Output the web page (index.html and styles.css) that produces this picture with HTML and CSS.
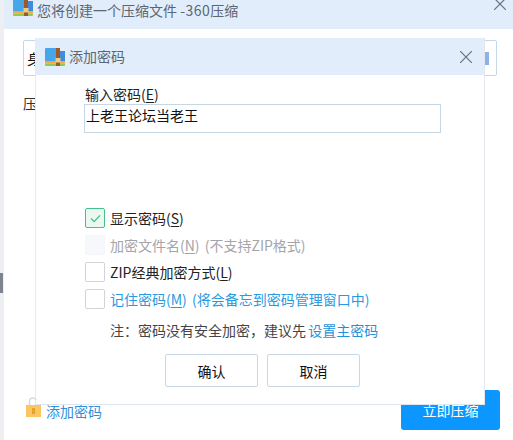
FILE: index.html
```html
<!DOCTYPE html>
<html lang="zh-CN">
<head>
<meta charset="utf-8">
<title>添加密码</title>
<link rel="stylesheet" href="styles.css">
</head>
<body>
<svg class="defs" aria-hidden="true">
  <symbol id="zip" viewBox="0 0 20 20">
    <path d="M0 2Q0 1 1 1H11V15H0Z" fill="#46a6ea"></path>
    <path d="M15 4H20V15H15Z" fill="#3f8cdc"></path>
    <rect y="14" width="20" height="2.500" fill="#f2a93f"></rect>
    <path d="M0 16.500H20V18Q20 19 19 19H1Q0 19 0 18Z" fill="#8fcb4e"></path>
    <rect x="11" y="1" width="4" height="18" fill="#9c5a2a"></rect>
    <rect x="10.500" y="11" width="5" height="4.500" fill="#edc98a"></rect>
  </symbol>
</svg>
<div class="side">
  <span class="side-mark"></span>
</div>
<main class="window">
  <header class="win-title">
    <svg class="zip-icon top" viewBox="0 0 20 20" aria-hidden="true"><use href="#zip"></use></svg>
    <span class="win-name">您将创建一个压缩文件 <span class="ver">-360</span>压缩</span>
    <svg class="close win-close" viewBox="0 0 12 12" aria-hidden="true"><path d="M0 0L12 12M12 0L0 12"></path></svg>
  </header>
  <div class="path-box"><span>身</span><i class="path-mark"></i></div>
  <div class="format-label">压</div>
  <footer class="win-foot">
    <a class="add-pass">
      <svg class="lock" viewBox="0 0 15 20" aria-hidden="true">
        <path d="M3.500 8V4.500Q3.500 1 7 1Q9.500 1 10 3" fill="none" stroke="#d9d9dc" stroke-width="1.500"></path>
        <rect y="8" width="15" height="12" fill="#f9c662"></rect>
        <rect x="6" y="11" width="3" height="6" fill="#e9a02e"></rect>
      </svg>
      <span>添加密码</span>
    </a>
    <button class="go">立即压缩</button>
  </footer>
</main>

<section class="dialog">
  <header class="dlg-title">
    <svg class="zip-icon" viewBox="0 0 20 20" aria-hidden="true"><use href="#zip"></use></svg>
    <span>添加密码</span>
    <svg class="close" viewBox="0 0 12 12" aria-hidden="true"><path d="M0 0L12 12M12 0L0 12"></path></svg>
  </header>
  <div class="dlg-body">
    <label class="pw-label">输入密码(<u>E</u>)</label>
    <div class="pw-input">上老王论坛当老王</div>
    <ul class="options">
      <li class="opt"><span class="box on"><svg viewBox="0 0 12 10" aria-hidden="true"><path d="M1 5L4.500 8.500L11 1.500"></path></svg></span><span>显示密码(<u>S</u>)</span></li>
      <li class="opt dim"><span class="box off"></span><span>加密文件名(<u>N</u>) (不支持ZIP格式)</span></li>
      <li class="opt"><span class="box"></span><span>ZIP经典加密方式(<u>L</u>)</span></li>
      <li class="opt link"><span class="box"></span><span>记住密码(<u>M</u>) (将会备忘到密码管理窗口中)</span></li>
    </ul>
    <p class="note">注：密码没有安全加密，建议先 <a>设置主密码</a></p>
    <div class="actions">
      <button class="btn">确认</button>
      <button class="btn">取消</button>
    </div>
  </div>
</section>
</body>
</html>
```
FILE: styles.css
```css
* { box-sizing: border-box; }
html, body { height: 100%; }
body {
  margin: 0;
  width: 513px;
  height: 440px;
  overflow: hidden;
  display: flex;
  position: relative;
  background: #fff;
  color: #222;
  font-family: "Noto Sans CJK SC", "Microsoft YaHei", sans-serif;
  font-size: 14px;
  line-height: 20px;
}
u { text-underline-offset: 2px; }
.defs { display: none; }

.side {
  width: 4px;
  flex: none;
  background: #eeeff3;
  padding-top: 273px;
}
.side-mark {
  display: block;
  width: 3px;
  height: 20px;
  background: #7d8390;
}

.window {
  flex: 1;
  display: flex;
  flex-direction: column;
  min-width: 0;
}
.win-title {
  height: 29px;
  flex: none;
  display: flex;
  align-items: flex-start;
  gap: 4px;
  padding: 0 7px 0 9px;
  background: #e1edfb;
  color: #5c6570;
}
.zip-icon { width: 20px; height: 20px; flex: none; display: block; }
.zip-icon.top { margin-top: -3px; }
.win-name { flex: 1; }
.ver { letter-spacing: 0.500px; }
.close {
  width: 12px;
  height: 12px;
  flex: none;
  fill: none;
  stroke: #6a7079;
  stroke-width: 1.200;
}
.win-close { margin-top: -2px; }

.path-box {
  margin: 11px 16px 0 19px;
  height: 36px;
  border: 1px solid #c5d6e6;
  border-radius: 2px;
  display: flex;
  align-items: center;
  justify-content: space-between;
  padding-left: 3px;
  color: #111;
}
.path-mark {
  width: 4px;
  height: 13px;
  margin-right: 7px;
  background: #8fb2e6;
}
.format-label {
  margin: 17px 0 0 19px;
  color: #333;
}

.win-foot {
  margin-top: auto;
  height: 50px;
  padding: 0 13px 10px 22px;
  display: flex;
  align-items: flex-end;
  justify-content: space-between;
}
.add-pass {
  display: flex;
  align-items: flex-start;
  gap: 5px;
  height: 33px;
  color: #2f8fd8;
  position: relative;
  z-index: 2;
}
.lock { width: 15px; height: 20px; flex: none; }
.add-pass span { margin-top: 4px; line-height: 20px; }
.go {
  width: 99px;
  height: 40px;
  border: 0;
  border-radius: 3px;
  background: #0b97ff;
  color: #fff;
  font: inherit;
}

.dialog {
  position: absolute;
  z-index: 1;
  left: 35px;
  top: 38px;
  width: 450px;
  height: 367px;
  background: #fff;
  border-left: 1px solid #e8e9f2;
  border-right: 1px solid #e3e6ec;
  border-bottom: 1px solid #dde6ee;
  display: flex;
  flex-direction: column;
}
.dlg-title {
  height: 37px;
  flex: none;
  background: #e1edfb;
  color: #5c6570;
  display: flex;
  align-items: center;
  gap: 4px;
  padding: 0 12px 0 9px;
}
.dlg-title span { flex: 1; margin-top: -2px; }
.dlg-body {
  flex: 1;
  padding: 9px 0 0 48px;
  display: flex;
  flex-direction: column;
}
.pw-label { display: block; height: 20px; margin-left: 1px; color: #222; }
.pw-input {
  width: 357px;
  height: 29px;
  border: 1px solid #c5d7e4;
  padding: 0 1px;
  font-size: 14px;
  color: #111;
}
.options {
  list-style: none;
  margin: 75px 0 0;
  padding: 0;
  display: flex;
  flex-direction: column;
  gap: 7px;
}
.opt {
  display: flex;
  align-items: center;
  gap: 5px;
  height: 20px;
  padding-left: 1px;
  word-spacing: 2px;
}
.box {
  width: 20px;
  height: 20px;
  flex: none;
  border: 1px solid #d2d4d8;
  border-radius: 2px;
  background: #fff;
  display: flex;
  align-items: center;
  justify-content: center;
}
.box.on { border-color: #45c08a; background: #e9f8f0; }
.box.on svg { width: 11px; height: 9px; fill: none; stroke: #45c08a; stroke-width: 1.500; }
.box.off { border-color: #f5f6f9; background: #f7f8fb; }
.dim { color: #a3a5aa; }
.link { color: #2a9ae0; }
.note {
  margin: 11px 0 0 26px;
  color: #444;
  word-spacing: -1px;
}
.note a { color: #1f93d8; }
.actions {
  margin-top: 14px;
  margin-left: 81px;
  display: flex;
  gap: 9px;
}
.btn {
  width: 93px;
  height: 33px;
  background: #fff;
  border: 1px solid #c9d8e6;
  border-radius: 2px;
  font: inherit;
  color: #111;
  padding: 0;
}
```
